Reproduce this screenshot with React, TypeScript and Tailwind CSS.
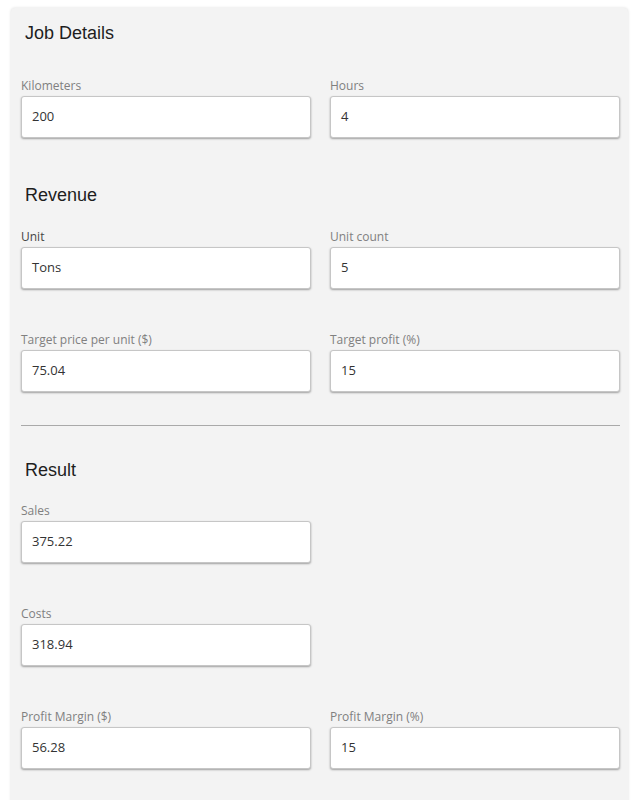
import React from 'react';

type FieldProps = { label: string; value: string; dark?: boolean };

function Field({ label, value, dark }: FieldProps) {
  return (
    <div className="flex flex-col">
      <label
        className={`text-[12px] leading-[14px] font-['Open_Sans',sans-serif] ${dark ? 'text-[#444]' : 'text-[#808080]'}`}
      >
        {label}
      </label>
      <div className="mt-[3px] h-[42px] flex items-center px-[10px] bg-white border border-[#c6c6c6] rounded-[3px] shadow-[0_1px_2px_rgba(0,0,0,0.35)] text-[13px] text-[#333] font-['Open_Sans',sans-serif]">
        {value}
      </div>
    </div>
  );
}

function Heading({ children }: { children: React.ReactNode }) {
  return (
    <h2 className="px-[4px] text-[18px] leading-6 text-[#1e1e1e] font-['Liberation_Sans',Arial,sans-serif]">
      {children}
    </h2>
  );
}

export default function App() {
  return (
    <div className="min-h-screen bg-white pt-[8px]">
      <div className="ml-[11px] w-[617px] bg-[#f3f3f3] rounded-[4px] shadow-[0_0_3px_rgba(0,0,0,0.14)] pl-[10px] pr-[8px] pt-[13px] pb-[60px]">
        {/* job details */}
        <Heading>Job Details</Heading>
        <div className="mt-[34px] grid grid-cols-2 gap-x-[19px]">
          <Field label="Kilometers" value="200" />
          <Field label="Hours" value="4" />
        </div>

        {/* revenue */}
        <div className="mt-[45px]">
          <Heading>Revenue</Heading>
        </div>
        <div className="mt-[23px] grid grid-cols-2 gap-x-[19px] gap-y-[44px]">
          <Field label="Unit" value="Tons" dark />
          <Field label="Unit count" value="5" />
          <Field label="Target price per unit ($)" value="75.04" />
          <Field label="Target profit (%)" value="15" />
        </div>

        <div className="mt-[33px] h-px bg-[#a9a9a9]" />

        {/* result */}
        <div className="mt-[32px]">
          <Heading>Result</Heading>
        </div>
        <div className="mt-[22px] grid grid-cols-2 gap-x-[19px] gap-y-[44px]">
          <Field label="Sales" value="375.22" />
          <div />
          <Field label="Costs" value="318.94" />
          <div />
          <Field label="Profit Margin ($)" value="56.28" />
          <Field label="Profit Margin (%)" value="15" />
        </div>
      </div>
    </div>
  );
}
